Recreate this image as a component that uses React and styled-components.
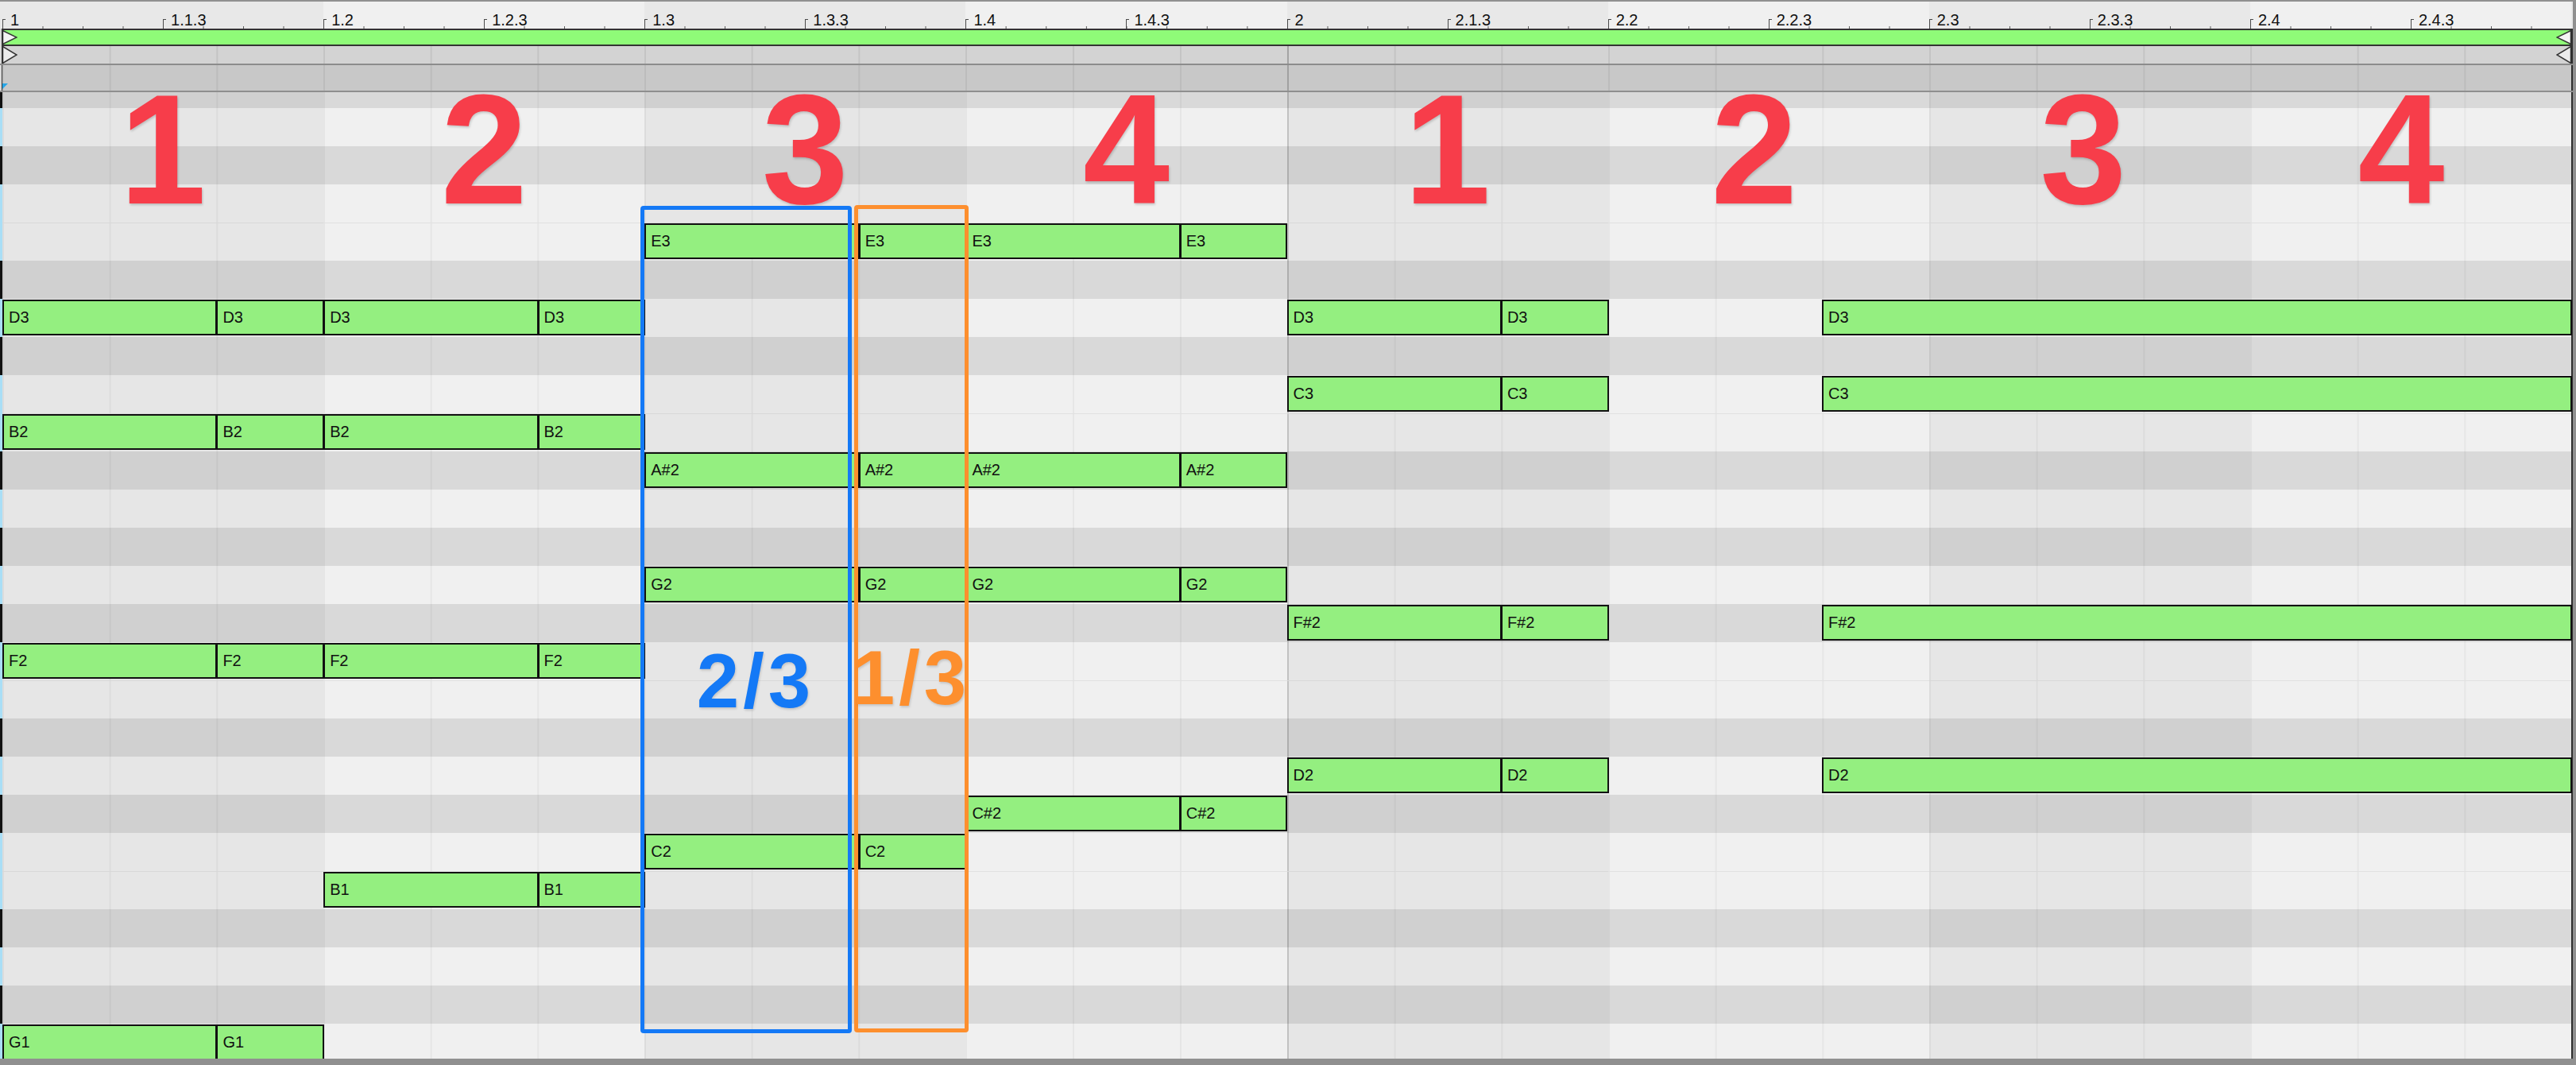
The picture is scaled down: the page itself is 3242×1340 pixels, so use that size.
import React from "react";
import styled, { createGlobalStyle, css } from "styled-components";

const GlobalStyle = createGlobalStyle`
  html, body {
    margin: 0;
    padding: 0;
    background: #8e8e8e;
  }
  body {
    font-family: "Liberation Sans", Arial, sans-serif;
  }
`;

const NAMES = ["C", "C#", "D", "D#", "E", "F", "F#", "G", "G#", "A", "A#", "B"];
const pitchName = (p) => NAMES[p % 12] + Math.floor(p / 12);

// G#3 (only partly visible) down to G1
const ROWS = Array.from({ length: 26 }, (_, i) => 44 - i);
const BEATS = [0, 1, 2, 3, 4, 5, 6, 7];

const RULER_LABELS = [
  "1", "1.1.3", "1.2", "1.2.3", "1.3", "1.3.3", "1.4", "1.4.3",
  "2", "2.1.3", "2.2", "2.2.3", "2.3", "2.3.3", "2.4", "2.4.3",
];

// a beat split in triplets: 2/3 + 1/3
const split = (beat, pitches) =>
  pitches.flatMap((p) => [
    { pitch: p, start: beat * 3, len: 2 },
    { pitch: p, start: beat * 3 + 2, len: 1 },
  ]);

const NOTES = [
  ...split(0, [38, 35, 29, 19]),
  ...split(1, [38, 35, 29, 23]),
  ...split(2, [40, 34, 31, 24]),
  ...split(3, [40, 34, 31, 25]),
  ...split(4, [38, 36, 30, 26]),
  ...[38, 36, 30, 26].map((p) => ({ pitch: p, start: 17, len: 7 })),
];

const COUNTS = ["1", "2", "3", "4", "1", "2", "3", "4"];
const COUNT_SHIFT = [0, 0, 0, 0, 0, -18, -8, -12];

const Frame = styled.div`
  width: 3242px;
  height: 1340px;
  box-sizing: border-box;
  padding: 2px 4px 8px 0;
  background: #909090;
  display: flex;
  flex-direction: column;
  overflow: hidden;
`;

const Ruler = styled.div`
  height: 34px;
  flex: none;
  display: flex;
  padding: 0 2px 0 3px;
  background: #e8e8e8;
`;

const RulerBeat = styled.div`
  flex: 1;
  display: grid;
  grid-template-columns: 1fr 1fr;
  background-color: ${(p) => (p.$odd ? "#f0f0f0" : "#e8e8e8")};
  background-image: linear-gradient(to right, #5a5a5a 0 1px, transparent 1px);
  background-size: 12.5% 3px;
  background-repeat: repeat-x;
  background-position: left bottom;
`;

const RulerMark = styled.div`
  position: relative;
  box-sizing: border-box;
  padding: 13px 0 0 10px;
  font-size: 20px;
  line-height: 20px;
  color: #111;
  white-space: nowrap;

  &::before {
    content: "";
    position: absolute;
    left: 0;
    top: 22px;
    bottom: 0;
    width: 3px;
    border-left: 1.5px solid #4a4a4a;
    border-top: 1.5px solid #4a4a4a;
  }
`;

const Stage = styled.div`
  position: relative;
  flex: 1;
  display: flex;
  flex-direction: column;
  min-height: 0;
`;

const HeaderRow = styled.div`
  display: flex;
  flex: none;
  height: ${(p) => p.$h}px;
  ${(p) =>
    p.$divider &&
    css`
      border-bottom: 2px solid ${p.$divider};
    `}
`;

const Rail = styled.div`
  width: 3px;
  flex: none;
  background: linear-gradient(to right, #dadada 0 2px, #333 2px);
`;

const EdgeRight = styled.div`
  width: 2px;
  flex: none;
  background: #2e2e2e;
`;

const ClipBar = styled.div`
  flex: 1;
  position: relative;
  border-top: 2px solid #333;
  border-bottom: 2px solid #333;
  background: #8ffb78;
`;

const Lanes = styled.div`
  flex: 1;
  display: flex;
  position: relative;
`;

const Lane = styled.div`
  flex: 1;
  background-color: ${(p) => p.$bg};
  background-image: linear-gradient(to right, ${(p) => p.$line} 0 2px, transparent 2px);
  background-size: calc(100% / 3) 100%;
  background-repeat: repeat-x;
  ${(p) =>
    p.$bar &&
    css`
      box-shadow: inset 2px 0 0 ${p.$barLine};
    `}
  ${(p) =>
    p.$seam &&
    css`
      border-top: 1px solid rgba(0, 0, 0, 0.06);
    `}
`;

const ChevronSvg = styled.svg`
  position: absolute;
  top: 0;
  ${(p) => (p.$side === "left" ? "left: 0;" : "right: 0;")}
`;

const Chevron = ({ side, h, fill }) => (
  <ChevronSvg $side={side} width="19" height={h} viewBox={`0 0 19 ${h}`}>
    <polygon
      points={
        side === "left"
          ? `0.5,0.5 18,${h / 2} 0.5,${h - 0.5}`
          : `18.5,0.5 1,${h / 2} 18.5,${h - 0.5}`
      }
      fill={fill}
      stroke="#333"
      strokeWidth="1.5"
    />
  </ChevronSvg>
);

const StartMarker = styled.svg`
  position: absolute;
  left: 0;
  bottom: 2px;
`;

const Grid = styled.div`
  flex: 1;
  overflow: hidden;
`;

const RowStack = styled.div`
  display: flex;
  flex-direction: column;
  margin-top: -28px;
`;

const KeyRow = styled.div`
  display: flex;
  height: 48px;
  flex: none;
`;

const KeyEdge = styled.div`
  width: 3px;
  flex: none;
  background: ${(p) => (p.$black ? "#111" : "#a9def6")};
`;

const Note = styled.div`
  position: absolute;
  top: 1px;
  height: 45px;
  box-sizing: border-box;
  border: 2px solid #111;
  background: #94ef80;
  display: flex;
  align-items: center;
  padding-left: 6px;
  font-size: 20px;
  color: #111;
  white-space: nowrap;
  overflow: hidden;
`;

const Overlay = styled.div`
  position: absolute;
  top: 0;
  bottom: 0;
  left: 3px;
  right: 2px;
  pointer-events: none;
`;

const Counts = styled.div`
  display: grid;
  grid-template-columns: repeat(8, 1fr);
  margin-top: 40px;
`;

const Count = styled.div`
  font-size: 196px;
  line-height: normal;
  font-weight: 700;
  text-align: center;
  color: #f73d4a;
  text-shadow: 1px 2px 3px rgba(0, 0, 0, 0.18);
  transform: translateX(${(p) => p.$dx}px);
`;

const Bracket = styled.div`
  position: absolute;
  left: ${(p) => p.$left}px;
  top: ${(p) => p.$top}px;
  width: ${(p) => p.$width}px;
  height: 1041px;
  box-sizing: border-box;
  border: 5px solid ${(p) => p.$color};
  border-radius: 4px;
  display: flex;
  flex-direction: column;
  align-items: center;
  padding-top: ${(p) => p.$pad}px;
  color: ${(p) => p.$color};
`;

const Fraction = styled.div`
  font-size: 96px;
  line-height: 96px;
  font-weight: 700;
  letter-spacing: 5px;
  white-space: nowrap;
  text-shadow: 1px 2px 3px rgba(0, 0, 0, 0.15);
  transform: translateX(${(p) => p.$dx || 0}px);
`;

const laneTone = (black, odd) => {
  if (black) return odd ? "#d9d9d9" : "#d0d0d0";
  return odd ? "#f0f0f0" : "#e6e6e6";
};

export default function App() {
  return (
    <>
      <GlobalStyle />
      <Frame>
        <Ruler>
          {BEATS.map((b) => (
            <RulerBeat key={b} $odd={b % 2 === 1}>
              <RulerMark>{RULER_LABELS[b * 2]}</RulerMark>
              <RulerMark>{RULER_LABELS[b * 2 + 1]}</RulerMark>
            </RulerBeat>
          ))}
        </Ruler>

        <Stage>
          <HeaderRow $h={22}>
            <Rail />
            <ClipBar>
              <Chevron side="left" h={18} fill="#f4f4f4" />
              <Chevron side="right" h={18} fill="#f4f4f4" />
            </ClipBar>
            <EdgeRight />
          </HeaderRow>

          <HeaderRow $h={22} $divider="#8c8c8c">
            <Rail />
            <Lanes>
              {BEATS.map((b) => (
                <Lane key={b} $bg="#d3d3d3" $line="rgba(0,0,0,0.07)" $bar={b === 4} $barLine="rgba(0,0,0,0.16)" />
              ))}
              <Chevron side="left" h={22} fill="#ececec" />
              <Chevron side="right" h={22} fill="#ececec" />
            </Lanes>
            <EdgeRight />
          </HeaderRow>

          <HeaderRow $h={32} $divider="#8f8f8f">
            <Rail />
            <Lanes>
              {BEATS.map((b) => (
                <Lane key={b} $bg="#c8c8c8" $line="rgba(0,0,0,0.06)" $bar={b === 4} $barLine="rgba(0,0,0,0.14)" />
              ))}
              <StartMarker width="7" height="7" viewBox="0 0 7 7">
                <polygon points="0,0 7,0 0,7" fill="#27a6e7" />
              </StartMarker>
            </Lanes>
            <EdgeRight />
          </HeaderRow>

          <Grid>
            <RowStack>
              {ROWS.map((p) => {
                const name = pitchName(p);
                const black = name.includes("#");
                const seam = name.startsWith("E") || name.startsWith("B");
                return (
                  <KeyRow key={p}>
                    <KeyEdge $black={black} />
                    <Lanes>
                      {BEATS.map((b) => (
                        <Lane
                          key={b}
                          $bg={laneTone(black, b % 2 === 1)}
                          $line="rgba(0,0,0,0.045)"
                          $bar={b === 4}
                          $barLine="rgba(0,0,0,0.12)"
                          $seam={seam}
                        />
                      ))}
                      {NOTES.filter((n) => n.pitch === p).map((n) => (
                        <Note
                          key={n.start}
                          style={{
                            left: `${(n.start / 24) * 100}%`,
                            width: `calc(${(n.len / 24) * 100}% + 1px)`,
                          }}
                        >
                          {name}
                        </Note>
                      ))}
                    </Lanes>
                    <EdgeRight />
                  </KeyRow>
                );
              })}
            </RowStack>
          </Grid>

          <Overlay>
            <Counts>
              {COUNTS.map((c, i) => (
                <Count key={i} $dx={COUNT_SHIFT[i]}>
                  {c}
                </Count>
              ))}
            </Counts>
            <Bracket $color="#1479f6" $left={803} $top={223} $width={266} $pad={545}>
              <Fraction $dx={12}>2/3</Fraction>
            </Bracket>
            <Bracket $color="#fd8f2e" $left={1072} $top={222} $width={144} $pad={542}>
              <Fraction>1/3</Fraction>
            </Bracket>
          </Overlay>
        </Stage>
      </Frame>
    </>
  );
}
